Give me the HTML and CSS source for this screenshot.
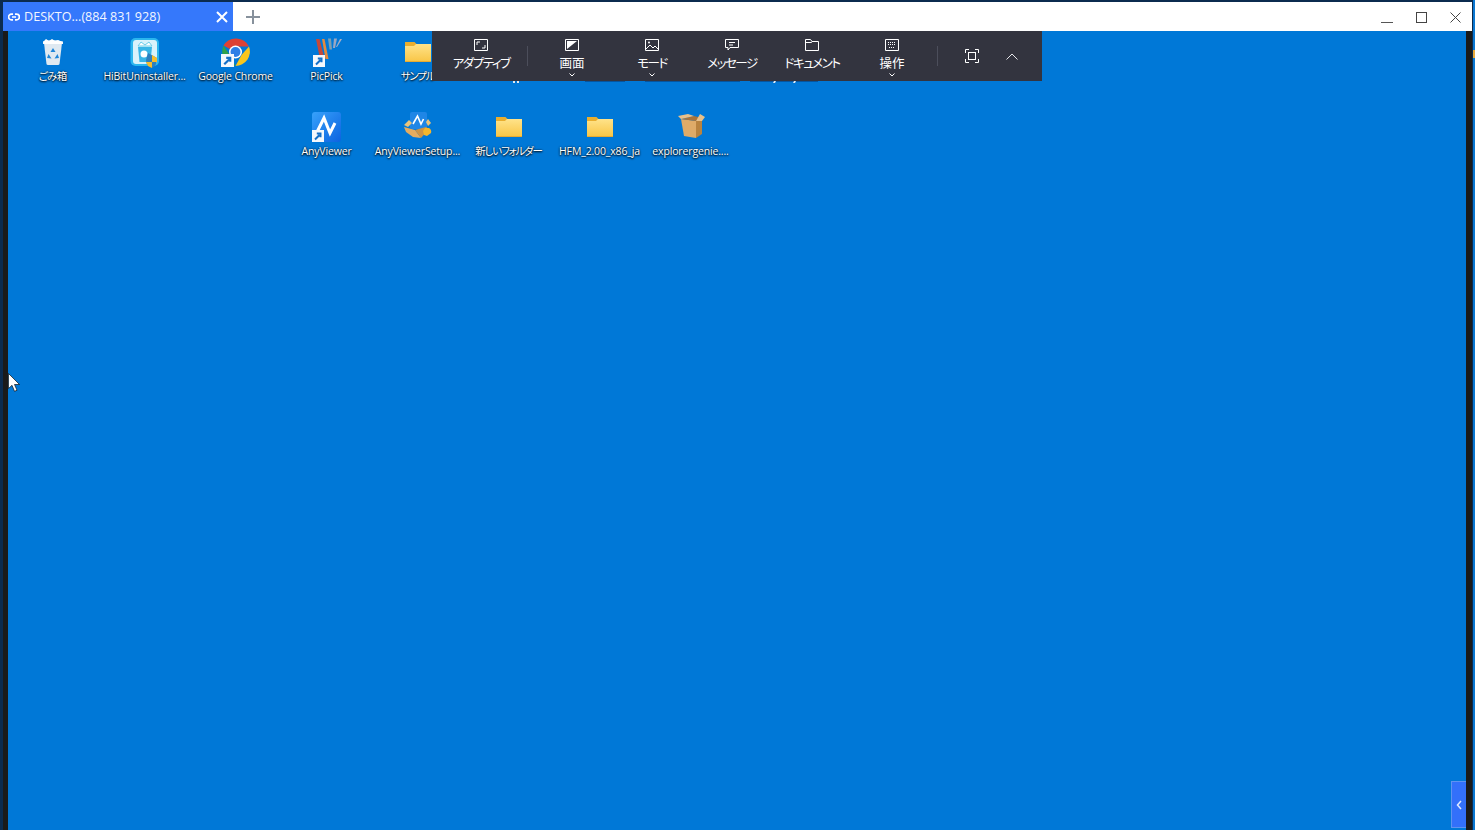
FILE: index.html
```html
<!DOCTYPE html>
<html lang="ja">
<head>
<meta charset="utf-8">
<title>AnyViewer</title>
<link rel="stylesheet" href="styles.css">
</head>
<body>
<svg class="defs" width="0" height="0" aria-hidden="true">
  <defs>
    <linearGradient id="fold" x1="0" y1="0" x2="0" y2="1"><stop offset="0" stop-color="#ffe38a"/><stop offset="1" stop-color="#f8c545"/></linearGradient>
    <symbol id="folder" viewBox="0 0 32 32">
      <path d="M3 6h9.500l2.500 2.500h14V26H3z" fill="#e9ae2f"/>
      <path d="M3 10h9l2-2h15v18H3z" fill="url(#fold)"/>
      <path d="M3 25h26v1H3z" fill="#e8ab32"/>
    </symbol>
    <symbol id="arrow" viewBox="0 0 12 12">
      <rect width="12" height="12" fill="#f4f8fc"/>
      <path d="M3 9.500 7.500 5M4.800 3.500H8.500V7.200" fill="none" stroke="#1470c8" stroke-width="2"/>
    </symbol>
  </defs>
</svg>
<div class="frame">
  <main class="window">
    <header class="tabbar">
      <div class="tab">
        <svg class="tab-link" viewBox="0 0 12 8" width="12" height="8"><path d="M5 1.200H3.400a2.800 2.800 0 0 0 0 5.600H5M7 1.200h1.600a2.800 2.800 0 0 1 0 5.600H7M4 4h4" fill="none" stroke="#fff" stroke-width="1.700"/></svg>
        <span class="tab-title">DESKTO...(884 831 928)</span>
        <svg class="tab-close" viewBox="0 0 12 12" width="12" height="12"><path d="M1 1l10 10M11 1 1 11" stroke="#fff" stroke-width="2"/></svg>
      </div>
      <svg class="tab-add" viewBox="0 0 14 14" width="14" height="14"><path d="M7 0v14M0 7h14" stroke="#87919c" stroke-width="2"/></svg>
      <div class="win-btns">
        <svg viewBox="0 0 12 11" width="12" height="11"><path d="M0 10.500h12" stroke="#555" stroke-width="1"/></svg>
        <svg viewBox="0 0 11 11" width="11" height="11"><rect x=".5" y=".5" width="10" height="10" fill="none" stroke="#444" stroke-width="1"/></svg>
        <svg viewBox="0 0 11 11" width="11" height="11"><path d="M.5.500l10 10M10.500.500l-10 10" stroke="#444" stroke-width="1"/></svg>
      </div>
    </header>
    <div class="remote">
      <div class="gutter-left"></div>
      <section class="desktop">
        <div class="icons">
          <div class="icon-row">
            <div class="item">
              <svg class="ico" viewBox="0 0 32 32"><path d="M6 7h18l-2.500 21q-.2 1-1.500 1H10q-1.300 0-1.500-1z" fill="#dfe9f1"/><path d="M5 5.500q10-2.500 20 0V8H5z" fill="#f6f8fa"/><path d="M5 6l3-3 3 2 3-2 3 2 3-1 4 2-1 2H7z" fill="#fff"/><path d="M15 12l2.500 4h-5zM19.500 18l1.500 4-4.500.5zM10.500 18l3 4.500-4.500-.5z" fill="#1f86d8"/></svg>
              <span class="label label-tight">ごみ箱</span>
            </div>
            <div class="item">
              <svg class="ico" viewBox="0 0 32 32"><rect x="1.500" y="2" width="28.500" height="28" rx="5" fill="#2bb6ee"/><rect x="4" y="4" width="24" height="24" rx="3" fill="#d8f2fb"/><path d="M9 11h14l-1.500 15h-11z" fill="#38b5e6"/><path d="M9 10l3-4 4 3 4-3 3 4z" fill="#fff" stroke="#6acde9"/><circle cx="15" cy="18" r="3.500" fill="#fff"/><path d="M19 17l9 5v3q-1 5-5 7l-4-2q-2-3-2-6z" fill="#2e7fbe"/><path d="M23 19l5 3v4h-5zM23 26v6l-4-2-2-4z" fill="#f6bd2d"/></svg>
              <span class="label">HiBitUninstaller...</span>
            </div>
            <div class="item">
              <svg class="ico" viewBox="0 0 32 32"><path d="M15.500 16 3.500 9.500A14.500 14.500 0 0 1 29 10.500H15.500z" fill="#de4134"/><path d="M29 10.500a14.500 14.500 0 0 1-13.500 19.500l6-11z" fill="#f9c61c"/><path d="M15.500 30A14.500 14.500 0 0 1 3.500 9.500l6.500 10z" fill="#2fa24b"/><circle cx="15.500" cy="16" r="6.500" fill="#fff"/><circle cx="15.500" cy="16" r="5" fill="#2d7fe6"/><use href="#arrow" x="1" y="18" width="13" height="13"/></svg>
              <span class="label">Google Chrome</span>
            </div>
            <div class="item">
              <svg class="ico" viewBox="0 0 32 32"><path d="M5 3l3.500 0 5 20H9z" fill="#c4483a"/><path d="M11 3h2.500l4 20h-3z" fill="#e58a3c"/><path d="M17 2.500h3l1 11h-2.500z" fill="#7e9fb0"/><path d="M23 2.500h3L24 12h-2z" fill="#9aa7c2"/><path d="M29 3h2l-5 8h-1z" fill="#a8aec4"/><use href="#arrow" x="2" y="19" width="12" height="12"/></svg>
              <span class="label">PicPick</span>
            </div>
            <div class="item">
              <svg class="ico"><use href="#folder"/></svg>
              <span class="label label-kana">サンプル</span>
            </div>
          </div>
          <div class="icon-row icon-row-offset">
            <div class="item">
              <svg class="ico" viewBox="0 0 32 32"><defs><linearGradient id="av" x1="0" y1="0" x2="1" y2="1"><stop offset="0" stop-color="#37a2fb"/><stop offset="1" stop-color="#0c63e0"/></linearGradient></defs><rect x="1" y="1" width="29" height="30" rx="3" fill="url(#av)"/><path d="M6 21 13 7l6 15 5-10" fill="none" stroke="#fff" stroke-width="3"/><use href="#arrow" x="1" y="19" width="12" height="12"/></svg>
              <span class="label">AnyViewer</span>
            </div>
            <div class="item">
              <svg class="ico" viewBox="0 0 32 32"><rect x="8" y="1" width="17" height="17" rx="2" fill="#1f86e6"/><path d="M11 13l4.500-8 3.500 8 2.500-5" fill="none" stroke="#fff" stroke-width="1.600"/><path d="M2 14l5-5 3 3-4 4zM26 8l3 4-3 3-2-4z" fill="#e9c47c"/><path d="M2 16l11 3 6 8-8-1-7-5z" fill="#e4ac60"/><path d="M13 19l11-3 3 2-8 9z" fill="#cf9443"/><path d="M23 17h4q3 2 2 5l-4 3-3-1-1-4z" fill="#f4b62b"/></svg>
              <span class="label">AnyViewerSetup...</span>
            </div>
            <div class="item">
              <svg class="ico"><use href="#folder"/></svg>
              <span class="label label-kana">新しいフォルダー</span>
            </div>
            <div class="item">
              <svg class="ico"><use href="#folder"/></svg>
              <span class="label">HFM_2.00_x86_ja</span>
            </div>
            <div class="item">
              <svg class="ico" viewBox="0 0 32 32"><path d="M6 8l15 2v17L9 25z" fill="#dfab68"/><path d="M21 10l6-3v16l-6 4z" fill="#b9833f"/><path d="M6 8l13-3 8 2-6 3z" fill="#a8733a"/><path d="M6 8 3 5l10-2 6 2zM21 10l4-7 5 3-3 4z" fill="#e8c08a"/></svg>
              <span class="label">explorergenie....</span>
            </div>
          </div>
        </div>
        <svg class="cursor" viewBox="0 0 12 19" width="12" height="19"><path d="M.5.500v15l3.500-3.200 2.500 6 2.500-1-2.500-5.800h5z" fill="#fff" stroke="#111" stroke-width=".7"/></svg>
        <svg class="under-strip" viewBox="0 0 340 3" width="340" height="3" aria-hidden="true">
          <path d="M13 0h2v2h-2zM17 0h2v2h-2z" fill="#dfe8f2"/>
          <path d="M85 0h40v1H85zM145 0h95v1h-95zM250 0h68v1h-68z" fill="#0a3c78" opacity=".6"/>
          <path d="M274 0h2l-1 2h-2zM294 0h2l-1 2h-2z" fill="#dfe8f2"/>
        </svg>
        <nav class="toolbar">
          <div class="tool tool-first">
            <svg viewBox="0 0 14 12" width="14" height="12"><path d="M.5.500h13v11H.5z" fill="none" stroke="#fff"/><path d="M3 6V3h3M11 6v3H8" fill="none" stroke="#fff"/></svg>
            <span class="tool-label tool-label-kana">アダプティブ</span>
          </div>
          <div class="divider"></div>
          <div class="tool tool-screen">
            <svg viewBox="0 0 14 12" width="14" height="12"><path d="M.5.500h13v11H.5z" fill="none" stroke="#fff"/><path d="M2 2h10L2 10z" fill="#fff"/></svg>
            <span class="tool-label">画面</span>
            <svg class="caret" viewBox="0 0 6 4" width="6" height="4"><path d="M.5.500 3 3 5.500.5" fill="none" stroke="#fff"/></svg>
          </div>
          <div class="tool">
            <svg viewBox="0 0 14 12" width="14" height="12"><path d="M.5.500h13v11H.5z" fill="none" stroke="#fff"/><path d="M1 10l4-4 3 3 2-2 3 3" fill="none" stroke="#fff"/><circle cx="4" cy="3.500" r="1" fill="#fff"/></svg>
            <span class="tool-label tool-label-kana">モード</span>
            <svg class="caret" viewBox="0 0 6 4" width="6" height="4"><path d="M.5.500 3 3 5.500.5" fill="none" stroke="#fff"/></svg>
          </div>
          <div class="tool">
            <svg viewBox="0 0 14 12" width="14" height="12"><path d="M.5.500h13v8H5L3 11V8.500H.5z" fill="none" stroke="#fff"/><path d="M4 3.500h6M4 6h4" stroke="#fff"/></svg>
            <span class="tool-label tool-label-kana">メッセージ</span>
          </div>
          <div class="tool">
            <svg viewBox="0 0 14 12" width="14" height="12"><path d="M.5 11.500V.500h5l1.500 2h6.500v9zM.5 3.500h6l.5-1" fill="none" stroke="#fff"/></svg>
            <span class="tool-label tool-label-kana">ドキュメント</span>
          </div>
          <div class="tool">
            <svg viewBox="0 0 14 12" width="14" height="12"><path d="M.5.500h13v11H.5z" fill="none" stroke="#fff"/><path d="M3 3.500h8M3 5.500h8M4 8.500h6" stroke="#fff" stroke-dasharray="1 1"/></svg>
            <span class="tool-label">操作</span>
            <svg class="caret" viewBox="0 0 6 4" width="6" height="4"><path d="M.5.500 3 3 5.500.5" fill="none" stroke="#fff"/></svg>
          </div>
          <div class="divider divider-end"></div>
          <svg class="tool-fit" viewBox="0 0 14 14" width="14" height="14"><path d="M.5 4V.500H4M10 .500h3.500V4M13.500 10v3.500H10M4 13.500H.5V10" fill="none" stroke="#fff"/><rect x="3.500" y="3.500" width="7" height="7" fill="none" stroke="#fff"/></svg>
          <svg class="tool-up" viewBox="0 0 12 7" width="12" height="7"><path d="M.5 6.500 6 1l5.500 5.500" fill="none" stroke="#e6e6ea"/></svg>
        </nav>
        <div class="side-handle">
          <svg viewBox="0 0 6 10" width="6" height="10"><path d="M5 1 1.500 5 5 9" fill="none" stroke="#dfeaff" stroke-width="1.500"/></svg>
        </div>
      </section>
      <div class="gutter-right"></div>
    </div>
  </main>
  <div class="edge"><span class="edge-mark"></span></div>
</div>
</body>
</html>
```

FILE: styles.css
```css
* { box-sizing: border-box; }
html, body { margin: 0; padding: 0; height: 100%; overflow: hidden; }
body { font-family: "Open Sans", "Noto Sans", "Noto Sans CJK JP", sans-serif; }
.defs { position: absolute; }

.frame {
  display: flex;
  height: 830px;
  width: 1475px;
  padding-left: 3px;
  background: #0b2b4f;
}
.window {
  flex: 1;
  display: flex;
  flex-direction: column;
  min-width: 0;
  padding-top: 2px;
  border-right: 1px solid #0b2b4f;
}
.edge {
  width: 2px;
  background: #0a78d2;
  padding-top: 50px;
}
.edge-mark {
  display: block;
  height: 8px;
  background: #e8a93a;
}

/* title bar */
.tabbar {
  height: 29px;
  flex: none;
  display: flex;
  align-items: center;
  background: #fff;
}
.tab {
  width: 230px;
  height: 29px;
  flex: none;
  display: flex;
  align-items: center;
  padding: 0 5px;
  gap: 4px;
  background: #3578fb;
  color: #f2f6ff;
}
.tab-title {
  flex: 1;
  font-size: 12.600px;
  white-space: nowrap;
}
.tab-add { margin-left: 13px; }
.win-btns {
  margin-left: auto;
  display: flex;
  gap: 23px;
  padding: 2px 11px 0 0;
}
.win-btns svg { display: block; }

/* remote view */
.remote { flex: 1; display: flex; min-height: 0; }
.gutter-left { width: 5px; background: #1a1a1a; flex: none; }
.gutter-right { width: 6px; background: #1a1a1a; flex: none; }
.desktop {
  flex: 1;
  position: relative;
  background: #0078d7;
  overflow: hidden;
}
.icons { padding-top: 5px; }
.icon-row { display: flex; height: 75px; }
.icon-row-offset { padding-left: 273px; }
.item {
  width: 91px;
  flex: none;
  display: flex;
  flex-direction: column;
  align-items: center;
}
.ico { width: 32px; height: 32px; display: block; flex: none; }
.label {
  height: 15px;
  margin-top: 1px;
  line-height: 15px;
  font-size: 10.500px;
  color: #fff;
  letter-spacing: -.15px;
  white-space: nowrap;
  font-feature-settings: "palt";
  text-shadow: 0 1px 2px #000, 0 0 2px rgba(0,0,0,.8);
}
.label-tight { letter-spacing: -.7px; margin-left: -2px; }
.label-kana { letter-spacing: -1.200px; }

/* cursor and remnants peeking out under the toolbar */
.cursor { position: absolute; left: 0; top: 342px; }
.under-strip { position: absolute; left: 492px; top: 50px; }

/* toolbar */
.toolbar {
  position: absolute;
  left: 424px;
  top: 0;
  width: 610px;
  height: 50px;
  display: flex;
  align-items: center;
  background: #33343f;
  color: #fff;
  font-family: "Noto Sans CJK JP", sans-serif;
}
.tool {
  width: 80px;
  height: 50px;
  flex: none;
  position: relative;
  display: flex;
  flex-direction: column;
  align-items: center;
  padding-top: 8px;
}
.tool svg { display: block; flex: none; }
.tool-first { width: 95px; padding-left: 3px; }
.tool-screen { margin-left: 4px; }
.tool-label {
  margin-top: 3px;
  font-size: 12.500px;
  line-height: 18px;
  white-space: nowrap;
  font-feature-settings: "palt";
}
.tool-label-kana { letter-spacing: -1.500px; }
.caret { position: absolute; left: 37px; top: 42px; }
.divider { width: 1px; height: 20px; background: #4c4e5b; flex: none; }
.divider-end { margin-left: 5px; }
.tool-fit { margin-left: 27px; flex: none; }
.tool-up { margin-left: 27px; flex: none; }

/* side handle */
.side-handle {
  position: absolute;
  right: 0;
  bottom: 2px;
  width: 15px;
  height: 47px;
  display: flex;
  align-items: center;
  justify-content: center;
  background: #3370fa;
  border: 1px solid #5e93f0;
  border-right: 0;
}
```
